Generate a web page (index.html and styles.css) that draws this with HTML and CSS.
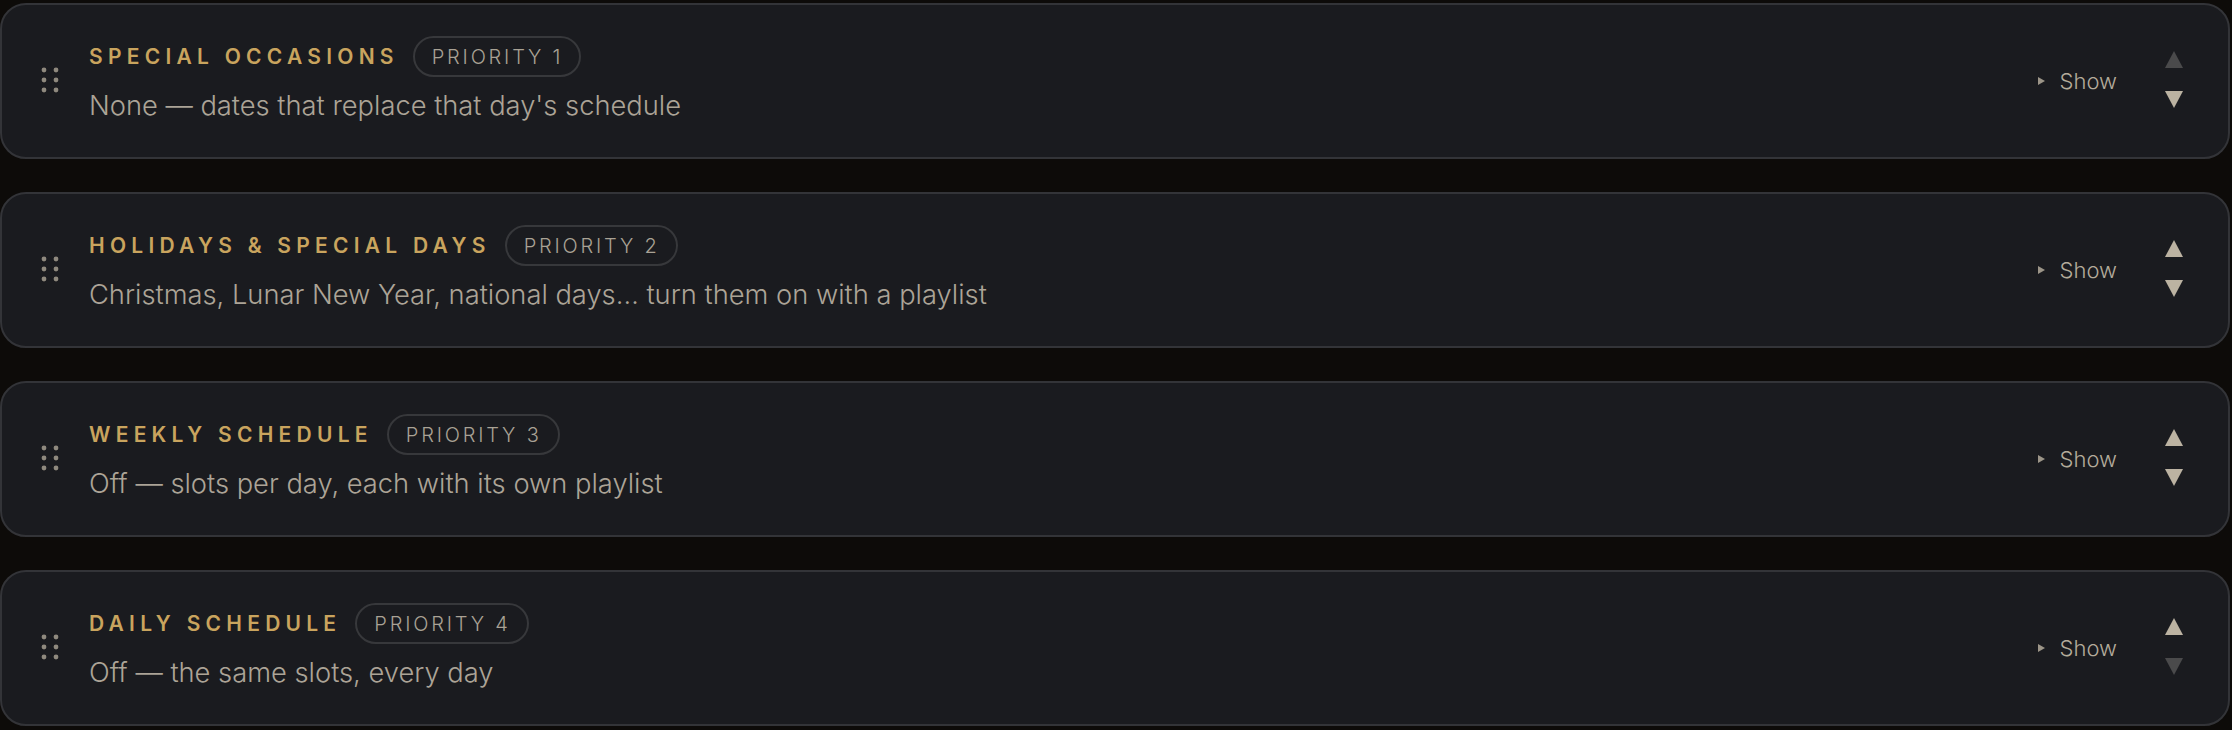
FILE: index.html
```html
<!DOCTYPE html>
<html lang="en">
<head>
<meta charset="utf-8">
<title>Schedule priorities</title>
<link rel="stylesheet" href="styles.css">
</head>
<body>
<main class="list">
  <section class="card">
    <div class="handle"><svg width="18" height="26" viewBox="0 0 18 26"><g fill="currentColor"><circle cx="3" cy="3" r="2.4"/><circle cx="15" cy="3" r="2.4"/><circle cx="3" cy="13" r="2.4"/><circle cx="15" cy="13" r="2.4"/><circle cx="3" cy="23" r="2.4"/><circle cx="15" cy="23" r="2.4"/></g></svg></div>
    <div class="content">
      <div class="head"><h2 class="title">Special occasions</h2><span class="pill">Priority 1</span></div>
      <p class="desc">None — dates that replace that day's schedule</p>
    </div>
    <button class="show"><span class="caret"></span>Show</button>
    <div class="moves">
      <button class="move off"><svg width="18" height="17" viewBox="0 0 18 17"><polygon points="9,0 18,17 0,17" fill="currentColor"/></svg></button>
      <button class="move"><svg width="18" height="17" viewBox="0 0 18 17"><polygon points="0,0 18,0 9,17" fill="currentColor"/></svg></button>
    </div>
  </section>

  <section class="card">
    <div class="handle"><svg width="18" height="26" viewBox="0 0 18 26"><g fill="currentColor"><circle cx="3" cy="3" r="2.4"/><circle cx="15" cy="3" r="2.4"/><circle cx="3" cy="13" r="2.4"/><circle cx="15" cy="13" r="2.4"/><circle cx="3" cy="23" r="2.4"/><circle cx="15" cy="23" r="2.4"/></g></svg></div>
    <div class="content">
      <div class="head"><h2 class="title">Holidays &amp; special days</h2><span class="pill">Priority 2</span></div>
      <p class="desc">Christmas, Lunar New Year, national days… turn them on with a playlist</p>
    </div>
    <button class="show"><span class="caret"></span>Show</button>
    <div class="moves">
      <button class="move"><svg width="18" height="17" viewBox="0 0 18 17"><polygon points="9,0 18,17 0,17" fill="currentColor"/></svg></button>
      <button class="move"><svg width="18" height="17" viewBox="0 0 18 17"><polygon points="0,0 18,0 9,17" fill="currentColor"/></svg></button>
    </div>
  </section>

  <section class="card">
    <div class="handle"><svg width="18" height="26" viewBox="0 0 18 26"><g fill="currentColor"><circle cx="3" cy="3" r="2.4"/><circle cx="15" cy="3" r="2.4"/><circle cx="3" cy="13" r="2.4"/><circle cx="15" cy="13" r="2.4"/><circle cx="3" cy="23" r="2.4"/><circle cx="15" cy="23" r="2.4"/></g></svg></div>
    <div class="content">
      <div class="head"><h2 class="title">Weekly schedule</h2><span class="pill">Priority 3</span></div>
      <p class="desc">Off — slots per day, each with its own playlist</p>
    </div>
    <button class="show"><span class="caret"></span>Show</button>
    <div class="moves">
      <button class="move"><svg width="18" height="17" viewBox="0 0 18 17"><polygon points="9,0 18,17 0,17" fill="currentColor"/></svg></button>
      <button class="move"><svg width="18" height="17" viewBox="0 0 18 17"><polygon points="0,0 18,0 9,17" fill="currentColor"/></svg></button>
    </div>
  </section>

  <section class="card">
    <div class="handle"><svg width="18" height="26" viewBox="0 0 18 26"><g fill="currentColor"><circle cx="3" cy="3" r="2.4"/><circle cx="15" cy="3" r="2.4"/><circle cx="3" cy="13" r="2.4"/><circle cx="15" cy="13" r="2.4"/><circle cx="3" cy="23" r="2.4"/><circle cx="15" cy="23" r="2.4"/></g></svg></div>
    <div class="content">
      <div class="head"><h2 class="title">Daily schedule</h2><span class="pill">Priority 4</span></div>
      <p class="desc">Off — the same slots, every day</p>
    </div>
    <button class="show"><span class="caret"></span>Show</button>
    <div class="moves">
      <button class="move"><svg width="18" height="17" viewBox="0 0 18 17"><polygon points="9,0 18,17 0,17" fill="currentColor"/></svg></button>
      <button class="move off"><svg width="18" height="17" viewBox="0 0 18 17"><polygon points="0,0 18,0 9,17" fill="currentColor"/></svg></button>
    </div>
  </section>
</main>
</body>
</html>
```

FILE: styles.css
```css
html, body {
  margin: 0;
  padding: 0;
  background: #0d0b09;
  font-family: "Inter", "Liberation Sans", sans-serif;
}

.list {
  display: flex;
  flex-direction: column;
  gap: 33px;
  padding: 3px 2px 0 0;
}

.card {
  box-sizing: border-box;
  height: 156px;
  display: flex;
  align-items: center;
  padding: 0 39px 0 39px;
  background: #1a1b1f;
  border: 2px solid #333438;
  border-radius: 26px;
}

.handle {
  width: 18px;
  height: 26px;
  color: #8f897e;
  margin-right: 30px;
  margin-top: -3px;
  display: flex;
}

.content {
  flex: 1;
  display: flex;
  flex-direction: column;
  gap: 11px;
  min-width: 0;
}

.head {
  display: flex;
  align-items: center;
  gap: 14px;
  height: 41px;
  margin-top: -2px;
}

.title {
  margin: 0;
  font-size: 21px;
  font-weight: 600;
  letter-spacing: 0.25em;
  text-transform: uppercase;
  color: #c9a45e;
}

.pill {
  box-sizing: border-box;
  height: 41px;
  display: inline-flex;
  align-items: center;
  padding: 0 16px 0 17px;
  border: 2px solid #37383b;
  border-radius: 21px;
  font-size: 20px;
  font-weight: 300;
  letter-spacing: 0.14em;
  text-transform: uppercase;
  color: #a9a295;
}

.desc {
  margin: 0;
  font-size: 27.3px;
  font-weight: 300;
  line-height: 36px;
  color: #aca497;
}

.show {
  display: flex;
  align-items: center;
  gap: 15px;
  background: none;
  border: 0;
  padding: 0;
  margin-right: 42px;
  font-family: inherit;
  font-size: 22px;
  font-weight: 300;
  color: #b4ab9b;
}

.caret {
  width: 0;
  height: 0;
  border-top: 4px solid transparent;
  border-bottom: 4px solid transparent;
  border-left: 7px solid #9c9588;
}

.moves {
  display: flex;
  flex-direction: column;
  margin-top: -3px;
}

.move {
  width: 30px;
  height: 40px;
  display: flex;
  align-items: center;
  justify-content: center;
  background: none;
  border: 0;
  padding: 0;
  color: #bcb3a2;
}

.move.off {
  color: #4a4a4b;
}
```
